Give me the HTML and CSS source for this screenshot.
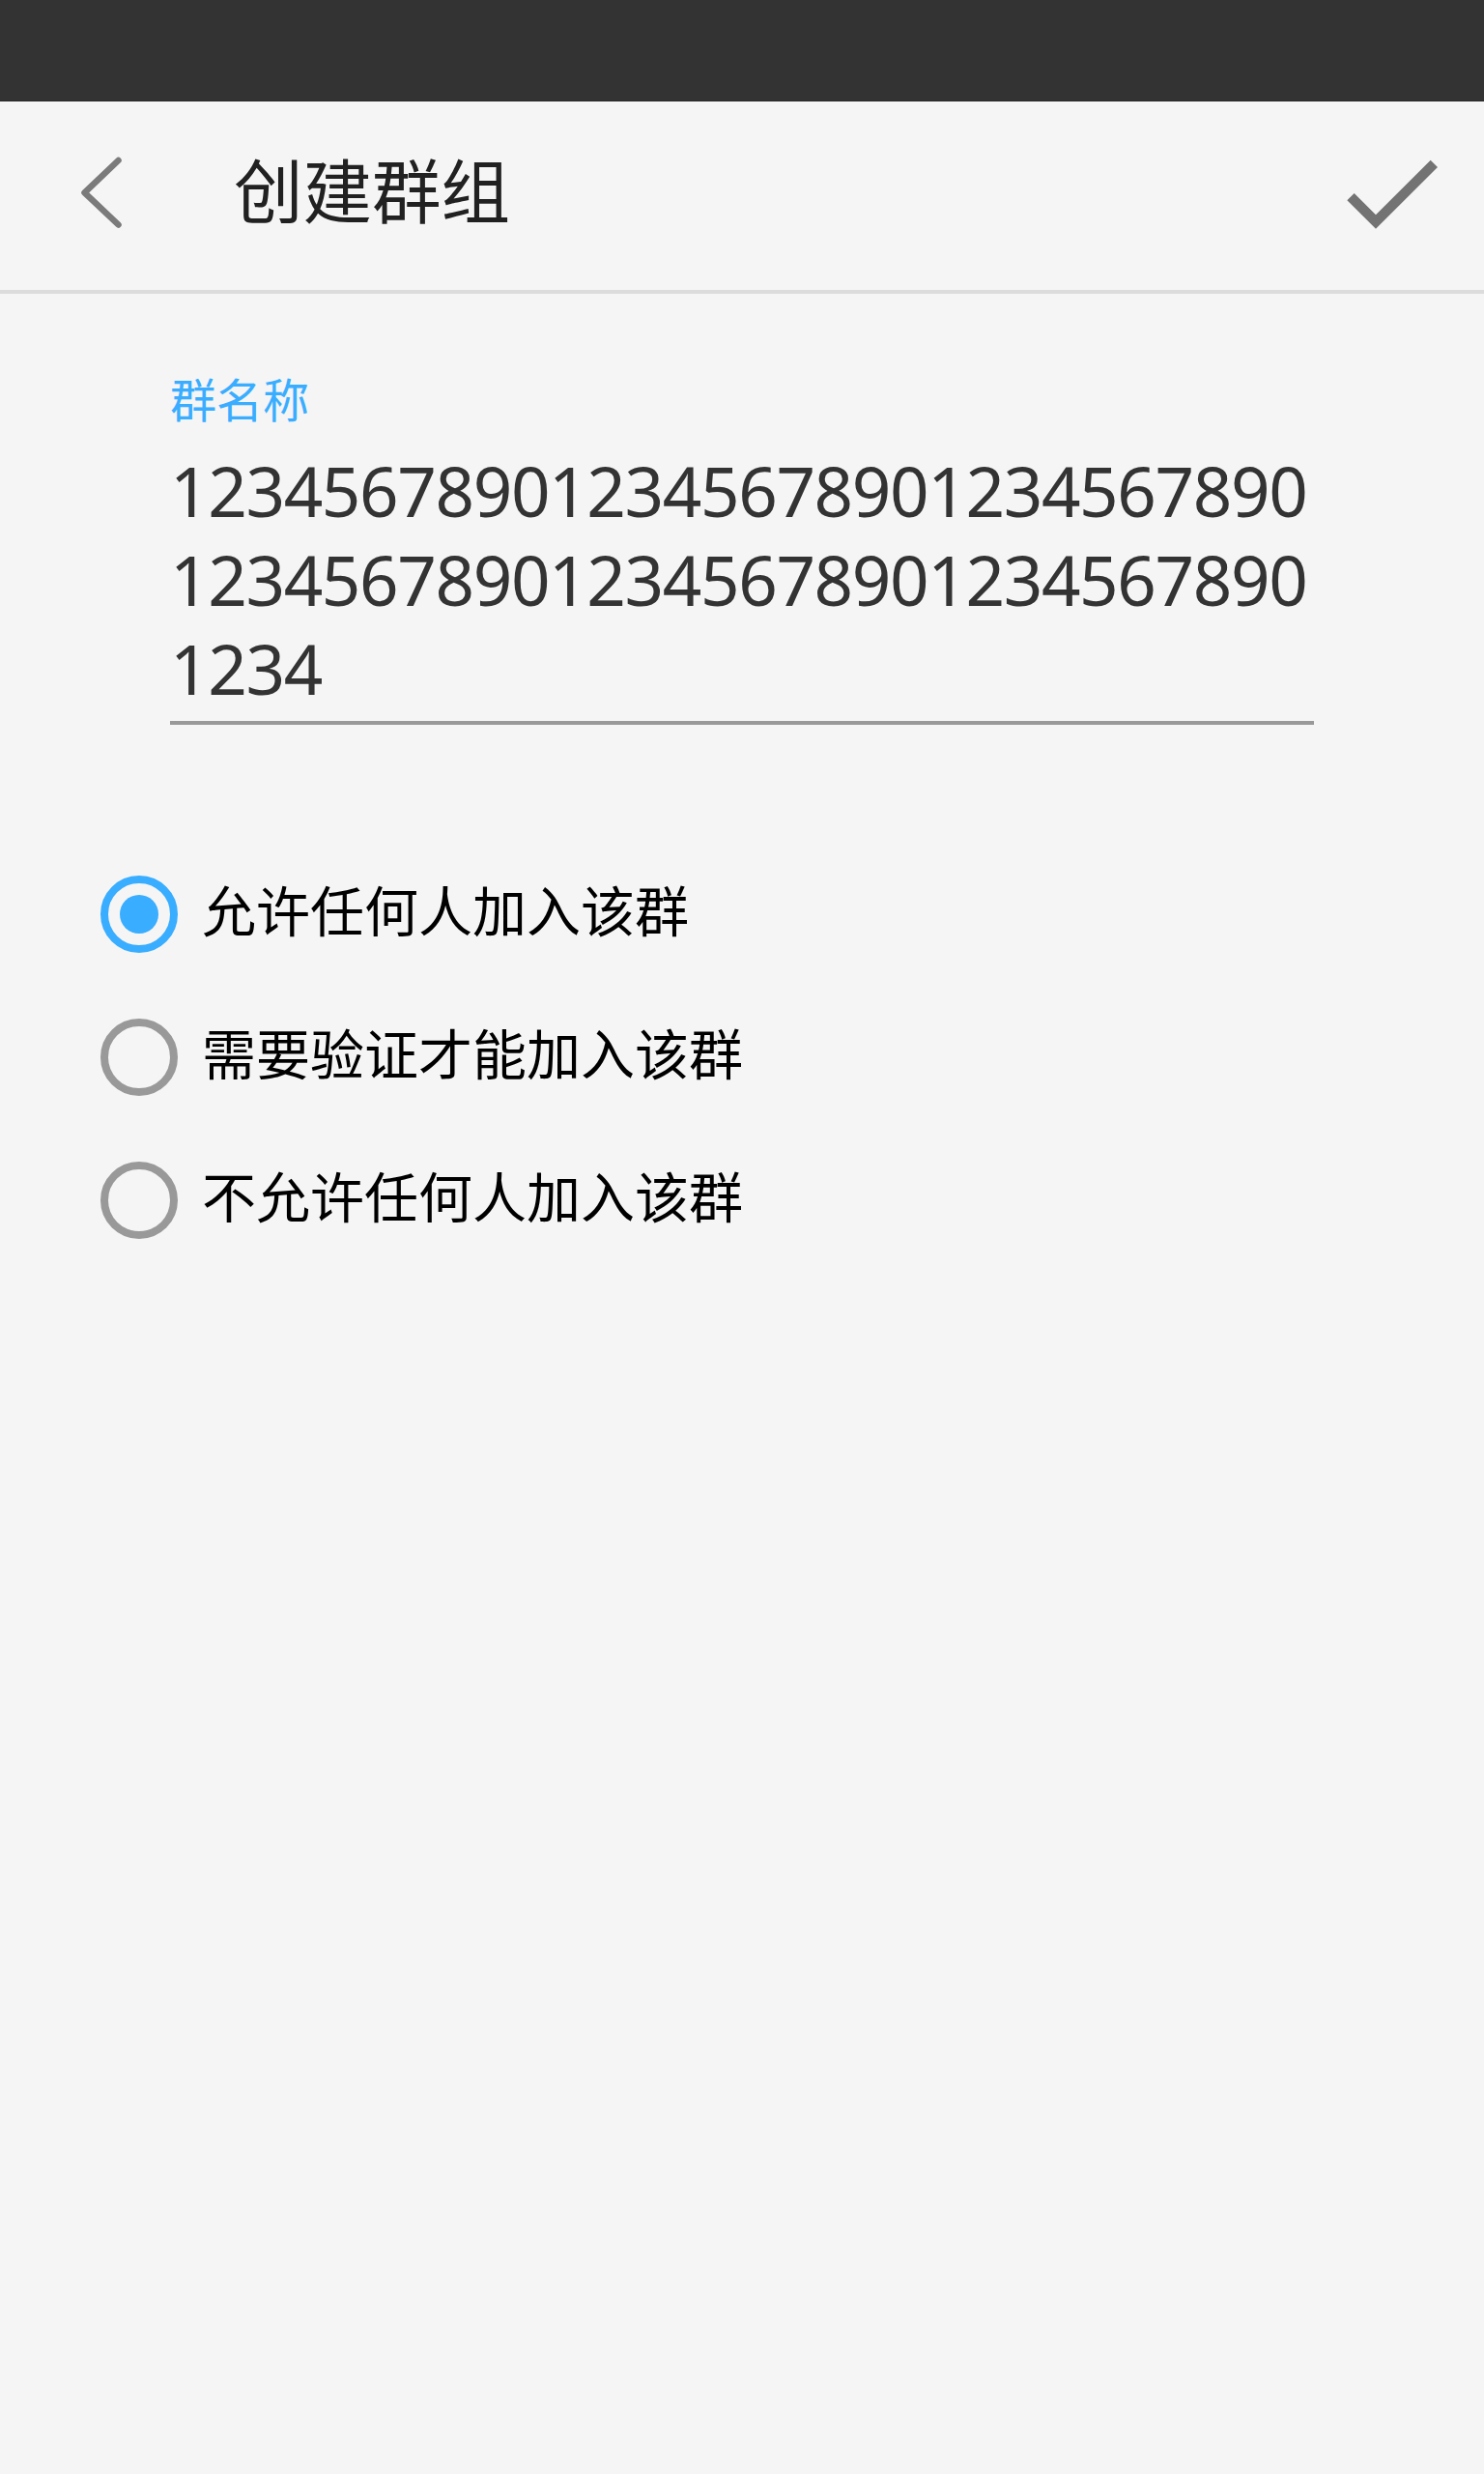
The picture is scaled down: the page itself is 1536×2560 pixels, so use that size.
FILE: index.html
```html
<!DOCTYPE html>
<html lang="zh-CN">
<head>
<meta charset="utf-8">
<title>创建群组</title>
<link rel="stylesheet" href="styles.css">
</head>
<body>
<div class="status-bar"></div>
<header class="app-bar">
  <svg class="back" viewBox="0 0 48 76" aria-hidden="true"><path d="M40.5 4 5.5 37.3 40.5 70.5"/></svg>
  <h1 class="title">创建群组</h1>
  <svg class="confirm" viewBox="0 0 96 72" aria-hidden="true"><path d="M86.7 .7 94 8 30 71.8 .3 42.3 7.7 35 30 57.2Z"/></svg>
</header>
<main class="form">
  <div class="field">
    <div class="label">群名称</div>
    <div class="value">1234567890123456789012345678901234567890123456789012345678901234</div>
  </div>
  <div class="options">
    <div class="option"><span class="radio checked"></span><span class="option-text">允许任何人加入该群</span></div>
    <div class="option"><span class="radio"></span><span class="option-text">需要验证才能加入该群</span></div>
    <div class="option"><span class="radio"></span><span class="option-text">不允许任何人加入该群</span></div>
  </div>
</main>
</body>
</html>
```
FILE: styles.css
```css
* {
  box-sizing: border-box;
}

body {
  margin: 0;
  min-height: 2560px;
  background: #f5f5f5;
  font-family: "Noto Sans CJK SC", sans-serif;
}

.status-bar {
  height: 105px;
  background: #333;
  border-bottom: 1px solid #2a2829;
}

.app-bar {
  display: flex;
  align-items: center;
  height: 199px;
  padding: 0 46px 6px 82px;
  border-bottom: 4px solid #dcdcdc;
}

.back {
  width: 48px;
  height: 76px;
  fill: none;
  stroke: #7b7b7b;
  stroke-width: 6.5;
  stroke-linecap: round;
  stroke-linejoin: round;
}

.title {
  flex: 1;
  margin: 0 0 12px 112px;
  font-size: 71.5px;
  line-height: 104px;
  font-weight: 400;
  color: #212121;
}

.confirm {
  width: 96px;
  height: 72px;
  margin-top: 3px;
  fill: #737373;
}

.field {
  margin: 75px 176px 0;
  height: 371px;
  border-bottom: 4px solid #999;
}

.label {
  height: 64px;
  font-size: 48px;
  line-height: 64px;
  color: #39adff;
}

.value {
  padding-top: 19px;
  font-family: "Noto Sans", sans-serif;
  font-size: 71px;
  line-height: 92px;
  letter-spacing: -1.4px;
  word-break: break-all;
  color: #333;
}

.options {
  display: flex;
  flex-direction: column;
  gap: 68px;
  padding: 156px 0 0 104px;
}

.option {
  display: flex;
  align-items: center;
  gap: 25px;
  height: 80px;
}

.radio {
  display: flex;
  align-items: center;
  justify-content: center;
  width: 80px;
  height: 80px;
  border: 8px solid #999;
  border-radius: 50%;
}

.radio.checked {
  border-color: #39adff;
}

.radio.checked::after {
  content: "";
  width: 40px;
  height: 40px;
  border-radius: 50%;
  background: #39adff;
}

.option-text {
  font-size: 56px;
  line-height: 80px;
  padding-bottom: 12px;
  color: #000;
}
```
